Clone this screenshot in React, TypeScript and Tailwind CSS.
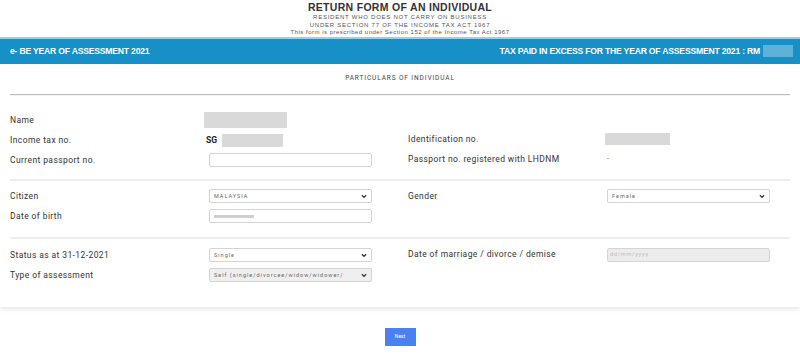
import React from "react";

const Chevron = () => (
  <svg width="6" height="5" viewBox="0 0 10 8" className="shrink-0">
    <path d="M1.5 2 L5 5.5 L8.5 2" fill="none" stroke="#333" strokeWidth="2.2" />
  </svg>
);

const Select = ({ text, disabled }: { text: string; disabled?: boolean }) => (
  <div
    className={`flex items-center justify-between h-[14px] w-[163px] border border-[#d4d4d4] rounded-[2px] pl-[4px] pr-[4px] ${
      disabled ? "bg-[#efefef]" : "bg-white"
    }`}
  >
    <span className="text-[5.5px] tracking-[1px] text-[#666] whitespace-nowrap overflow-hidden">{text}</span>
    <Chevron />
  </div>
);

const Label = ({ children }: { children: React.ReactNode }) => (
  <div className="w-[199px] shrink-0 text-[8.5px] text-[#333] tracking-[0.4px]">{children}</div>
);

const Redact = ({ w, h }: { w: number; h: number }) => (
  <div className="bg-[#d9d9d9]" style={{ width: w, height: h }} />
);

export default function App() {
  return (
    <div className="w-[800px] h-[355px] bg-white overflow-hidden font-['Roboto','Liberation_Sans',sans-serif]">
      {/* Header */}
      <div className="flex flex-col items-center pt-[2px] h-[37px] font-['Liberation_Sans',Arial,sans-serif]">
        <div className="text-[10.5px] leading-[11px] font-bold tracking-[0.3px] text-[#333]">RETURN FORM OF AN INDIVIDUAL</div>
        <div className="text-[6px] leading-[7.5px] tracking-[0.75px] text-[#555] mt-[1px]">RESIDENT WHO DOES NOT CARRY ON BUSINESS</div>
        <div className="text-[6px] leading-[7.5px] tracking-[0.75px] text-[#555]">UNDER SECTION 77 OF THE INCOME TAX ACT 1967</div>
        <div className="text-[6px] leading-[7.5px] tracking-[0.5px] text-[#555]">This form is prescribed under Section 152 of the Income Tax Act 1967</div>
      </div>

      {/* Blue bar */}
      <div className="h-[27px] bg-[#1690c6] border-t-2 border-[#8fd3ee] flex items-center justify-between pl-[10px] pr-[7px] text-white font-bold text-[8.6px] tracking-[-0.2px] font-['Liberation_Sans_Narrow','Liberation_Sans',sans-serif]">
        <span>e- BE YEAR OF ASSESSMENT 2021</span>
        <div className="flex items-center gap-[3px]">
          <span>TAX PAID IN EXCESS FOR THE YEAR OF ASSESSMENT 2021 : RM</span>
          <div className="w-[30px] h-[12px] bg-[#5eb2d8]" />
        </div>
      </div>

      {/* Card */}
      <div className="bg-white shadow-[0_3px_4px_rgba(0,0,0,0.08)] pb-[22px]">
        <div className="h-[30px] flex items-center justify-center text-[6.5px] tracking-[0.9px] text-[#444]">
          PARTICULARS OF INDIVIDUAL
        </div>
        <div className="mx-[10px] h-px bg-[#bdbdbd] shadow-[0_1px_1px_rgba(0,0,0,0.06)]" />

        {/* Section 1 */}
        <div className="px-[10px] pt-[15px] pb-[9px] flex flex-col">
          <div className="flex h-[20px] items-center">
            <div className="w-[398px] flex items-center">
              <div className="w-[194px] shrink-0 text-[8.5px] text-[#333] tracking-[0.4px]">Name</div>
              <Redact w={83} h={16} />
            </div>
          </div>
          <div className="flex h-[20px] items-center">
            <div className="w-[398px] flex items-center">
              <div className="w-[196px] shrink-0 text-[8.5px] text-[#333] tracking-[0.4px]">Income tax no.</div>
              <span className="text-[8.5px] font-bold text-[#222] mr-[5px]">SG</span>
              <Redact w={61} h={13} />
            </div>
            <div className="flex items-center -mt-[2px]">
              <div className="w-[197px] shrink-0 text-[8.5px] text-[#333] tracking-[0.4px]">Identification no.</div>
              <Redact w={65} h={12} />
            </div>
          </div>
          <div className="flex h-[20px] items-center">
            <div className="w-[398px] flex items-center">
              <Label>Current passport no.</Label>
              <div className="w-[163px] h-[14px] border border-[#d4d4d4] rounded-[2px] bg-white" />
            </div>
            <div className="flex items-center -mt-[2px]">
              <Label>Passport no. registered with LHDNM</Label>
              <span className="text-[7px] text-[#555]">-</span>
            </div>
          </div>
        </div>
        <div className="mx-[10px] h-[2px] bg-[#eeeeee]" />

        {/* Section 2 */}
        <div className="px-[10px] pt-[5px] pb-[11px] flex flex-col">
          <div className="flex h-[20px] items-center">
            <div className="w-[398px] flex items-center">
              <Label>Citizen</Label>
              <Select text="MALAYSIA" />
            </div>
            <div className="flex items-center">
              <Label>Gender</Label>
              <Select text="Female" />
            </div>
          </div>
          <div className="flex h-[20px] items-center">
            <div className="w-[398px] flex items-center">
              <Label>Date of birth</Label>
              <div className="w-[163px] h-[14px] border border-[#d4d4d4] rounded-[2px] bg-white flex items-center pl-[4px]">
                <div className="w-[40px] h-[3px] bg-[#cfcfcf]" />
              </div>
            </div>
          </div>
        </div>
        <div className="mx-[10px] h-[2px] bg-[#eeeeee]" />

        {/* Section 3 */}
        <div className="px-[10px] pt-[6px] flex flex-col">
          <div className="flex h-[20px] items-center">
            <div className="w-[398px] flex items-center">
              <Label>Status as at 31-12-2021</Label>
              <Select text="Single" />
            </div>
            <div className="flex items-center -mt-[1px]">
              <Label>Date of marriage / divorce / demise</Label>
              <div className="w-[163px] h-[14px] border border-[#d4d4d4] rounded-[2px] bg-[#ececec] flex items-center pl-[2px]">
                <span className="text-[5.5px] tracking-[0.8px] text-[#bbb]">dd/mm/yyyy</span>
              </div>
            </div>
          </div>
          <div className="flex h-[20px] items-center">
            <div className="w-[398px] flex items-center">
              <Label>Type of assessment</Label>
              <Select text="Self (single/divorcee/widow/widower/" disabled />
            </div>
          </div>
        </div>
      </div>

      {/* Next */}
      <div className="flex justify-center pt-[21px]">
        <div className="w-[31px] h-[18px] bg-[#4a80ef] flex items-center justify-center text-white text-[5px]">Next</div>
      </div>
    </div>
  );
}
